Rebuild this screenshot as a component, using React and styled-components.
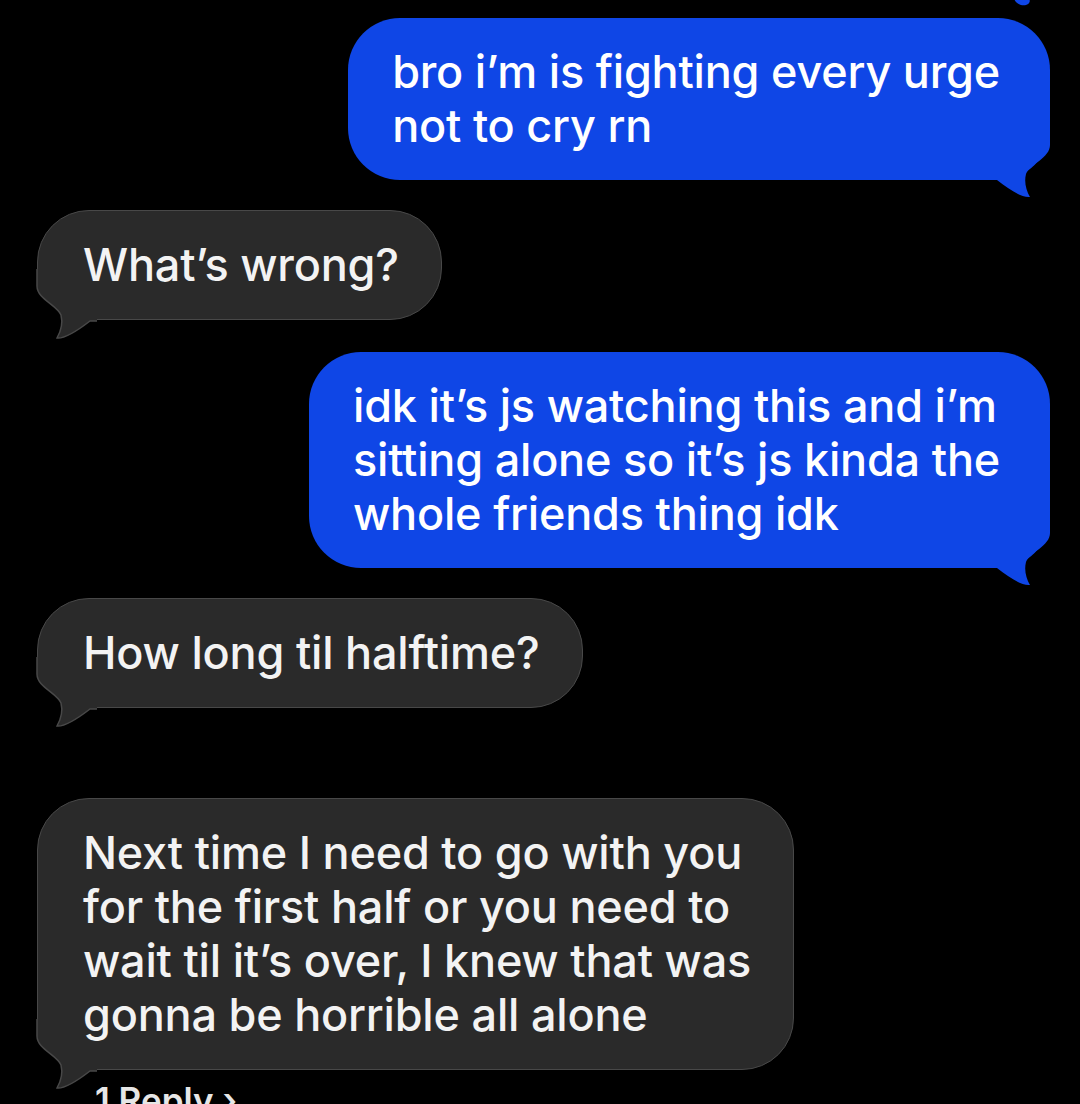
import React from "react";
import styled, { createGlobalStyle } from "styled-components";

const Global = createGlobalStyle`
  html, body { margin: 0; padding: 0; background: #000; }
  body { width: 1080px; height: 1104px; overflow: hidden; }
  #root { height: 1104px; }
`;

const Screen = styled.div`
  position: relative;
  width: 1080px;
  height: 1104px;
  background: #000;
  overflow: hidden;
  box-sizing: border-box;
  padding: 18px 30px 0 37px;
  display: flex;
  flex-direction: column;
  font-family: "Inter", "Liberation Sans", sans-serif;
`;

const Row = styled.div`
  display: flex;
  justify-content: ${(p) => (p.$me ? "flex-end" : "flex-start")};
  margin-top: ${(p) => p.$gap || 0}px;
`;

const Bubble = styled.div`
  position: relative;
  box-sizing: border-box;
  padding: ${(p) => (p.$me ? "27px 50px 27px 44px" : "27px 42px 27px 45px")};
  border-radius: 52px;
  background: ${(p) => (p.$me ? "#0f46e6" : "#2a2a2a")};
  border: ${(p) => (p.$me ? "none" : "1.5px solid #484848")};
  color: ${(p) => (p.$me ? "#ffffff" : "#f3f3f3")};
  font-size: 45px;
  font-weight: 500;
  letter-spacing: -0.2px;
  line-height: 54px;
  white-space: nowrap;
`;

const Text = styled.div`
  position: relative;
  z-index: 1;
`;

const TailSvg = styled.svg`
  position: absolute;
  z-index: 0;
  width: 60px;
  height: 70px;
  overflow: visible;
  ${(p) =>
    p.$me
      ? "right: 0; bottom: -18px;"
      : "left: -1.5px; bottom: -19.5px; transform: scaleX(-1);"}
`;

const TAIL =
  "C60 30 40 36 36 46 C34 54 36 62 40 69 C32 70 20 62 7 52 H0";

const Tail = ({ me }) => (
  <TailSvg $me={me} viewBox="0 0 60 70">
    <path d={`M0 0 H60 V17 ${TAIL} Z`} fill={me ? "#0f46e6" : "#2a2a2a"} />
    {!me && (
      <path
        d={`M60 0 V17 ${TAIL}`}
        fill="none"
        stroke="#484848"
        strokeWidth="1.5"
      />
    )}
  </TailSvg>
);

const TopTail = styled.div`
  position: absolute;
  top: -6px;
  right: 50px;
  width: 16px;
  height: 11px;
  border-radius: 50%;
  background: #0f46e6;
  transform: rotate(20deg);
`;

const Reply = styled.div`
  margin-top: 12px;
  padding-left: 58px;
  color: #e6e6e6;
  font-size: 35px;
  font-weight: 600;
  line-height: 36px;
`;

const Message = ({ me, gap, lines }) => (
  <Row $me={me} $gap={gap}>
    <Bubble $me={me}>
      <Text>
        {lines.map((l, i) => (
          <div key={i}>{l}</div>
        ))}
      </Text>
      <Tail me={me} />
    </Bubble>
  </Row>
);

export default function App() {
  return (
    <>
      <Global />
      <Screen>
        <TopTail />
        <Message me lines={["bro i’m is fighting every urge", "not to cry rn"]} />
        <Message gap={30} lines={["What’s wrong?"]} />
        <Message
          me
          gap={32}
          lines={[
            "idk it’s js watching this and i’m",
            "sitting alone so it’s js kinda the",
            "whole friends thing idk",
          ]}
        />
        <Message gap={30} lines={["How long til halftime?"]} />
        <Message
          gap={90}
          lines={[
            "Next time I need to go with you",
            "for the first half or you need to",
            "wait til it’s over, I knew that was",
            "gonna be horrible all alone",
          ]}
        />
        <Reply>1 Reply ›</Reply>
      </Screen>
    </>
  );
}
